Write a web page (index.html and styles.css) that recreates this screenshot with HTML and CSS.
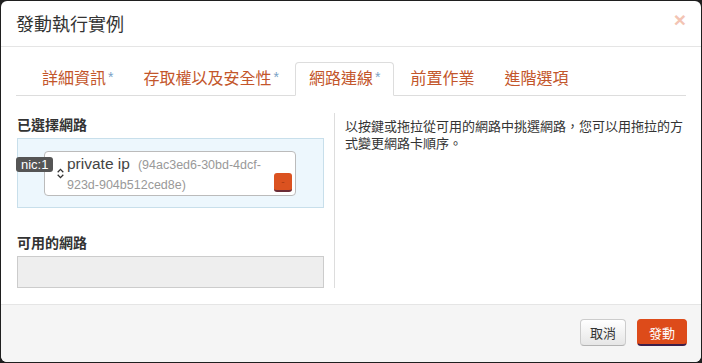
FILE: index.html
```html
<!DOCTYPE html>
<html lang="zh-Hant">
<head>
    <meta charset="UTF-8">
    <title>發動執行實例</title>
    <link rel="stylesheet" href="styles.css">
</head>
<body>

    <div class="modal">
        <div class="modal-header">
            <h3>發動執行實例</h3>
            <span class="close">&times;</span>
        </div>

        <div class="modal-body">
            <ul class="nav-tabs">
                <li><a>詳細資訊<span class="req">*</span></a></li>
                <li><a>存取權以及安全性<span class="req">*</span></a></li>
                <li class="active"><a>網路連線<span class="req">*</span></a></li>
                <li><a>前置作業</a></li>
                <li><a>進階選項</a></li>
            </ul>

            <div class="tab-pane">
                <div class="col-left">
                    <h4>已選擇網路</h4>
                    <div class="net-selected">
                        <div class="net-item">
                            <span class="nic">nic:1</span>
                            <svg class="drag" width="7" height="11" viewBox="0 0 7 11">
                                <path d="M0.7 4.2 L3.5 1.4 L6.3 4.2 M0.7 6.8 L3.5 9.6 L6.3 6.8" fill="none" stroke="#333" stroke-width="1.3"/>
                            </svg>
                            <span class="net-name">private ip</span><span class="net-id">(94ac3ed6-30bd-4dcf-<wbr>923d-904b512ced8e)</span>
                            <button class="btn-remove">-</button>
                        </div>
                    </div>

                    <h4>可用的網路</h4>
                    <div class="net-available"></div>
                </div>

                <div class="col-right">
                    <p>以按鍵或拖拉從可用的網路中挑選網路，您可以用拖拉的方式變更網路卡順序。</p>
                </div>
            </div>
        </div>

        <div class="modal-footer">
            <button class="btn">取消</button>
            <button class="btn btn-primary">發動</button>
        </div>
    </div>

</body>
</html>
```

FILE: styles.css
```css
html {
    background-color: #1f1f1f;
}

body {
    margin: 0;
    padding: 1px;
    font-family: 'Liberation Sans', 'Noto Sans CJK TC', sans-serif;
    font-size: 13px;
    color: #333;
}

.modal {
    height: 361px;
    background-color: #fff;
    border-radius: 6px;
    overflow: hidden;
    display: flex;
    flex-direction: column;
}

.modal-header {
    flex-shrink: 0;
    display: flex;
    justify-content: space-between;
    height: 45px;
    padding: 0 15px;
    border-bottom: 1px solid #e5e5e5;
}

.modal-header h3 {
    margin: 14px 0 0;
    font-size: 18px;
    font-weight: normal;
    line-height: 20px;
    color: #333;
}

.close {
    margin-top: 9px;
    font-size: 21px;
    font-weight: bold;
    line-height: 20px;
    color: #f3c4b3;
}

.modal-body {
    flex: 1;
    padding: 15px 15px 15px;
}

/* tabs */
.nav-tabs {
    display: flex;
    list-style: none;
    margin: 0;
    padding: 0 0 0 12px;
    border-bottom: 1px solid #ddd;
}

.nav-tabs li {
    margin: 0 2px -1px 0;
}

.nav-tabs a {
    display: block;
    padding: 6px 13px;
    font-size: 16px;
    line-height: 20px;
    color: #c3562b;
    border: 1px solid transparent;
    border-radius: 4px 4px 0 0;
}

.nav-tabs .active a {
    background-color: #fff;
    border-color: #ddd #ddd transparent;
}

.req {
    margin-left: 2px;
    font-size: 14px;
    vertical-align: top;
    line-height: 17px;
    color: #7aa2c6;
}

/* network pane */
.tab-pane {
    display: grid;
    grid-template-columns: 308px 1fr;
    padding-top: 17px;
}

.col-left {
    padding-left: 1px;
}

.col-left h4 {
    margin: 0 0 4px;
    padding-top: 3px;
    font-size: 14px;
    line-height: 18px;
    color: #333;
}

.net-selected {
    padding: 12px 27px 11px 26px;
    background-color: #edf7fd;
    border: 1px solid #c8dfeb;
    margin-bottom: 23px;
}

.net-item {
    position: relative;
    min-height: 41px;
    padding: 2px 20px 0 22px;
    background-color: #fff;
    border: 1px solid #bbb;
    border-radius: 4px;
    line-height: 19px;
}

.nic {
    position: absolute;
    left: -29px;
    top: 5px;
    padding: 0 5px;
    font-size: 13px;
    line-height: 15px;
    color: #fff;
    background-color: #555;
    border-radius: 3px;
}

.drag {
    position: absolute;
    left: 12px;
    top: 16px;
}

.net-name {
    font-size: 15.5px;
    color: #444;
}

.net-id {
    margin-left: 8px;
    font-size: 12.5px;
    color: #999;
}

.btn-remove {
    position: absolute;
    right: 3px;
    bottom: 3px;
    width: 18px;
    height: 19px;
    padding: 0;
    font-size: 10px;
    line-height: 14px;
    color: #b03c12;
    background-color: #db5220;
    border: none;
    border-bottom: 2px solid #6b2c36;
    border-radius: 3px;
}

.net-available {
    height: 30px;
    background-color: #eee;
    border: 1px solid #ccc;
}

.col-right {
    margin-left: 10px;
    padding-left: 10px;
    border-left: 1px solid #ddd;
}

.col-right p {
    margin: 0;
    padding-top: 5px;
    font-size: 13px;
    line-height: 17px;
    color: #333;
}

/* footer */
.modal-footer {
    flex-shrink: 0;
    display: flex;
    justify-content: flex-end;
    gap: 11px;
    padding: 14px 14px 16px;
    background-color: #f5f5f5;
    border-top: 1px solid #e5e5e5;
}

.btn {
    height: 27px;
    padding: 0 9px;
    font-family: inherit;
    font-size: 13px;
    color: #333;
    background: linear-gradient(#fff, #e6e6e6);
    border: 1px solid #ccc;
    border-bottom-color: #b3b3b3;
    border-radius: 4px;
}

.btn-primary {
    padding: 0 11px;
    color: #fff;
    background: #dd4b1a;
    border-color: #dd4b1a;
    border-bottom: 2px solid #3c1f4a;
}
```
